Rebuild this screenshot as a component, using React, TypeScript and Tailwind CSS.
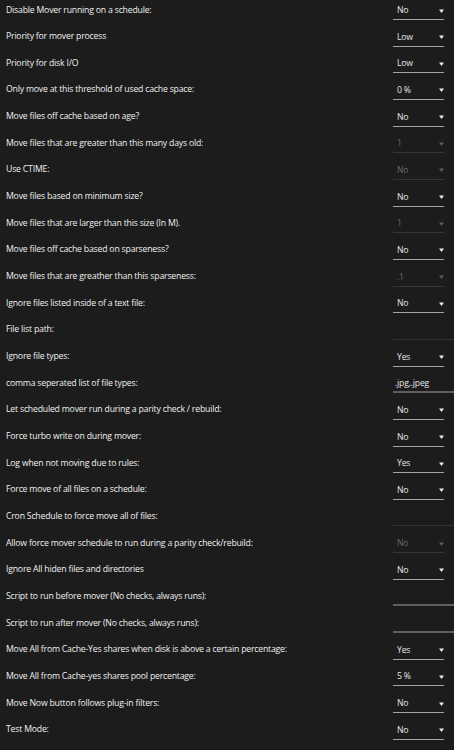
import React from "react";

type Row = {
  label: string;
  kind: "select" | "input";
  value?: string;
  disabled?: boolean;
};

const rows: Row[] = [
  { label: "Disable Mover running on a schedule:", kind: "select", value: "No" },
  { label: "Priority for mover process", kind: "select", value: "Low" },
  { label: "Priority for disk I/O", kind: "select", value: "Low" },
  { label: "Only move at this threshold of used cache space:", kind: "select", value: "0 %" },
  { label: "Move files off cache based on age?", kind: "select", value: "No" },
  { label: "Move files that are greater than this many days old:", kind: "select", value: "1", disabled: true },
  { label: "Use CTIME:", kind: "select", value: "No", disabled: true },
  { label: "Move files based on minimum size?", kind: "select", value: "No" },
  { label: "Move files that are larger than this size (In M).", kind: "select", value: "1", disabled: true },
  { label: "Move files off cache based on sparseness?", kind: "select", value: "No" },
  { label: "Move files that are greather than this sparseness:", kind: "select", value: ".1", disabled: true },
  { label: "Ignore files listed inside of a text file:", kind: "select", value: "No" },
  { label: "File list path:", kind: "input", value: "", disabled: true },
  { label: "Ignore file types:", kind: "select", value: "Yes" },
  { label: "comma seperated list of file types:", kind: "input", value: ".jpg,.jpeg" },
  { label: "Let scheduled mover run during a parity check / rebuild:", kind: "select", value: "No" },
  { label: "Force turbo write on during mover:", kind: "select", value: "No" },
  { label: "Log when not moving due to rules:", kind: "select", value: "Yes" },
  { label: "Force move of all files on a schedule:", kind: "select", value: "No" },
  { label: "Cron Schedule to force move all of files:", kind: "input", value: "", disabled: true },
  { label: "Allow force mover schedule to run during a parity check/rebuild:", kind: "select", value: "No", disabled: true },
  { label: "Ignore All hiden files and directories", kind: "select", value: "No" },
  { label: "Script to run before mover (No checks, always runs):", kind: "input", value: "" },
  { label: "Script to run after mover (No checks, always runs):", kind: "input", value: "" },
  { label: "Move All from Cache-Yes shares when disk is above a certain percentage:", kind: "select", value: "Yes" },
  { label: "Move All from Cache-yes shares pool percentage:", kind: "select", value: "5 %" },
  { label: "Move Now button follows plug-in filters:", kind: "select", value: "No" },
  { label: "Test Mode:", kind: "select", value: "No" },
];

function Caret({ dim }: { dim?: boolean }) {
  return (
    <svg width="5" height="4" viewBox="0 0 5 4" className={dim ? "text-[#5c5c5c]" : "text-[#e8e8e8]"}>
      <path d="M0 0.5 H5 L2.5 4 Z" fill="currentColor" />
    </svg>
  );
}

function Control({ row }: { row: Row }) {
  if (row.kind === "input") {
    return (
      <div
        className={`mt-[3px] h-[17px] w-[70px] shrink-0 flex items-center pl-[2px] pb-[1px] text-[#e4e4e4] ${
          row.disabled ? "border-b border-[#343434]" : "border-b-2 border-[#5e5e5e]"
        }`}>
        {row.value}
      </div>
    );
  }
  return (
    <div
      className={`mt-[3px] h-[17px] w-[51px] shrink-0 flex items-center justify-between pl-[4px] pb-[1px] border-b ${
        row.disabled ? "border-[#363636] text-[#6a6a6a]" : "border-[#a3a3a3] text-[#e4e4e4]"
      }`}>
      <span>{row.value}</span>
      <Caret dim={row.disabled} />
    </div>
  );
}

export default function App() {
  return (
    <div
      className="w-[454px] h-[750px] overflow-hidden bg-[#1c1c1c] text-[#f0f0f0] text-[8.7px] leading-[11px] tracking-[-0.2px]"
      style={{ fontFamily: '"Open Sans", "Noto Sans", sans-serif' }}>
      {rows.map((row, i) => (
        <div key={i} className="flex h-[26.67px]">
          <div className="w-[393px] shrink-0 pl-[6px] pt-[4.5px]">{row.label}</div>
          <Control row={row} />
        </div>
      ))}
    </div>
  );
}
